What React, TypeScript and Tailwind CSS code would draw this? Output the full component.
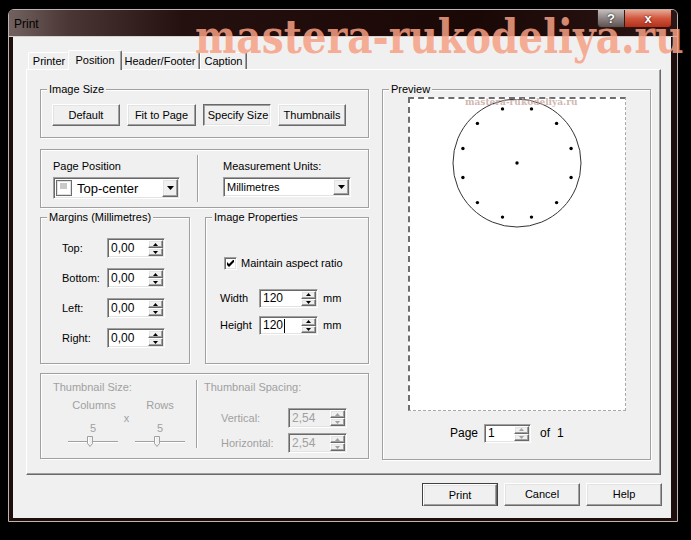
import React from "react";

const raised =
  "border border-t-white border-l-white border-r-[#696969] border-b-[#696969] shadow-[inset_-1px_-1px_0_#a0a0a0,inset_1px_1px_0_#e3e3e3]";
const pressed =
  "border border-t-[#696969] border-l-[#696969] border-r-white border-b-white shadow-[inset_1px_1px_0_#a0a0a0,inset_-1px_-1px_0_#e3e3e3]";
const sunken =
  "border border-t-[#a0a0a0] border-l-[#a0a0a0] border-r-white border-b-white shadow-[inset_1px_1px_0_#696969,inset_-1px_-1px_0_#e3e3e3]";
const etched = "border border-[#a0a0a0] shadow-[inset_1px_1px_0_#fff,1px_1px_0_#fff]";

function Tri({ up, w = 5, color = "#000" }: { up?: boolean; w?: number; color?: string }) {
  const h = Math.ceil(w / 2);
  const d = up ? `M${w / 2} 0 L${w} ${h} L0 ${h}Z` : `M0 0 L${w} 0 L${w / 2} ${h}Z`;
  return (
    <svg width={w} height={h} viewBox={`0 0 ${w} ${h}`} className="block">
      <path d={d} fill={color} />
    </svg>
  );
}

function Spinner({ dim }: { dim?: boolean }) {
  const c = dim ? "#a0a0a0" : "#000";
  return (
    <div className="flex w-[16px] flex-col p-px pl-0">
      <div className={`flex flex-1 items-center justify-center bg-[#f0f0f0] ${raised}`}>
        <Tri up w={5} color={c} />
      </div>
      <div className={`flex flex-1 items-center justify-center bg-[#f0f0f0] ${raised}`}>
        <Tri w={5} color={c} />
      </div>
    </div>
  );
}

function SpinEdit({
  value,
  className,
  dim,
  dimArrows,
  caret,
}: {
  value: string;
  className: string;
  dim?: boolean;
  dimArrows?: boolean;
  caret?: boolean;
}) {
  return (
    <div className={`flex ${sunken} ${dim ? "bg-[#f0f0f0] text-[#a0a0a0]" : "bg-white"} ${className}`}>
      <div className="flex flex-1 items-center pl-[3px] text-[12px]">
        {value}
        {caret && <span className="ml-px inline-block h-[14px] w-px bg-black" />}
      </div>
      <Spinner dim={dim || dimArrows} />
    </div>
  );
}

function Combo({ className, children }: { className: string; children: React.ReactNode }) {
  return (
    <div className={`flex bg-white ${sunken} ${className}`}>
      <div className="flex flex-1 items-center p-px">{children}</div>
      <div className="flex p-px">
        <div className={`flex w-[16px] items-center justify-center bg-[#f0f0f0] ${raised}`}>
          <Tri w={7} />
        </div>
      </div>
    </div>
  );
}

function GroupBox({
  label,
  className,
  children,
}: {
  label: string;
  className: string;
  children?: React.ReactNode;
}) {
  return (
    <div className={`relative ${etched} ${className}`}>
      <span className="absolute -top-[7px] left-[6px] bg-[#f0f0f0] px-[2px] leading-[13px]">{label}</span>
      {children}
    </div>
  );
}

function Btn({ label, className = "", down }: { label: string; className?: string; down?: boolean }) {
  return (
    <div
      className={`flex h-[22px] items-center justify-center bg-[#f0f0f0] ${down ? `${pressed} pl-[2px] pt-px` : raised} ${className}`}
    >
      {label}
    </div>
  );
}

function Slider() {
  return (
    <svg width="50" height="12" viewBox="0 0 50 12" className="block">
      <line x1="0" y1="5.5" x2="50" y2="5.5" stroke="#a0a0a0" />
      <line x1="0" y1="6.5" x2="50" y2="6.5" stroke="#fff" />
      <path d="M19.5 0.5 H24.5 V7.5 L22 10.5 L19.5 7.5Z" fill="#f0f0f0" stroke="#a0a0a0" />
      <path d="M20.5 1 V7.5" stroke="#fff" />
    </svg>
  );
}

function PageDrawing() {
  const cx = 107;
  const cy = 64;
  const dots = Array.from({ length: 12 }, (_, i) => {
    const a = ((15 + i * 30) * Math.PI) / 180;
    return [cx + 56 * Math.sin(a), cy - 56 * Math.cos(a)];
  });
  return (
    <svg width="216" height="132" viewBox="0 0 216 132" className="block">
      <circle cx={cx} cy={cy} r="64" fill="none" stroke="#333" strokeWidth="1" />
      {dots.map(([x, y], i) => (
        <circle key={i} cx={x} cy={y} r="1.7" fill="#000" />
      ))}
      <circle cx={cx} cy={cy} r="1.7" fill="#000" />
    </svg>
  );
}

export default function App() {
  return (
    <div className="relative h-[540px] w-[691px] overflow-hidden bg-black pl-[8px] pt-[9px] font-['Liberation_Sans',Arial,sans-serif] text-[11px] leading-[13px] text-black">
      <div className="flex h-[513px] w-[670px] flex-col overflow-hidden rounded-t-[6px] border border-[#bdb3b1] bg-[#1e0e0c]">
        {/* title bar */}
        <div className="flex h-[27px] items-start justify-between border-b border-[#d8d0cf] bg-[linear-gradient(to_right,#716260_0%,#4a3634_9%,#24100e_26%,#1a0806_70%,#2a1614_100%)]">
          <span className="pl-[5px] pt-[7px] text-[12px] leading-[14px] text-black">Print</span>
          <div className="relative z-20 -mt-px flex pr-[5px]">
            <div className="flex h-[19px] w-[28px] items-center justify-center rounded-bl-[4px] border border-[#2a1a18] bg-[linear-gradient(to_bottom,#c4bcbb,#8d8382_50%,#5d5250)] text-[13px] font-bold text-white [text-shadow:0_0_2px_#000]">
              ?
            </div>
            <div className="flex h-[19px] w-[47px] items-center justify-center rounded-br-[4px] border border-l-0 border-[#3a1008] bg-[linear-gradient(to_bottom,#e8a894,#d0553c_50%,#b3301c)] text-[13px] font-bold text-white [text-shadow:0_0_2px_#400]">
              x
            </div>
          </div>
        </div>

        {/* frame body */}
        <div className="flex-1 pb-[3px] pl-[4px] pr-[6px]">
          <div className="flex h-[481px] w-[658px] flex-col bg-[#f0f0f0] pl-[13px] pt-[13px]">
            {/* tabs */}
            <div className="flex h-[19px] items-end pl-[2px]">
              <div className="flex h-[17px] w-[42px] justify-center rounded-t-[2px] border-l border-r border-t border-l-white border-r-[#696969] border-t-white leading-[16px] shadow-[inset_-1px_0_0_#a0a0a0]">
                Printer
              </div>
              <div className="relative z-10 -mx-[2px] -mb-px flex h-[20px] w-[54px] justify-center rounded-t-[2px] border-l border-r border-t border-l-white border-r-[#696969] border-t-white bg-[#f0f0f0] pt-[2px] leading-[14px] shadow-[inset_-1px_0_0_#a0a0a0]">
                Position
              </div>
              <div className="flex h-[17px] w-[80px] justify-center rounded-t-[2px] border-l border-r border-t border-l-white border-r-[#696969] border-t-white leading-[16px] shadow-[inset_-1px_0_0_#a0a0a0]">
                Header/Footer
              </div>
              <div className="flex h-[17px] w-[47px] justify-center rounded-t-[2px] border-l border-r border-t border-l-white border-r-[#696969] border-t-white leading-[16px] shadow-[inset_-1px_0_0_#a0a0a0]">
                Caption
              </div>
            </div>

            {/* tab panel */}
            <div className="flex h-[406px] w-[635px] gap-[13px] border border-b-[#696969] border-l-white border-r-[#696969] border-t-white pl-[13px] pt-[19px] shadow-[inset_-1px_-1px_0_#a0a0a0]">
              {/* left column */}
              <div className="flex w-[329px] flex-col">
                <GroupBox label="Image Size" className="h-[49px] w-[329px]">
                  <div className="flex gap-[7px] pl-[11px] pt-[14px]">
                    <Btn label="Default" className="w-[68px]" />
                    <Btn label="Fit to Page" className="w-[69px]" />
                    <Btn label="Specify Size" className="w-[68px]" down />
                    <Btn label="Thumbnails" className="w-[68px]" />
                  </div>
                </GroupBox>

                <div className={`mt-[11px] flex h-[59px] w-[329px] pl-[12px] ${etched}`}>
                  <div className="flex w-[127px] flex-col pt-[10px]">
                    <span>Page Position</span>
                    <Combo className="mt-[4px] h-[22px] w-[127px]">
                      <svg width="16" height="16" viewBox="0 0 16 16" className="ml-px block">
                        <rect x="0.5" y="0.5" width="15" height="15" fill="#fff" stroke="#6d6d6d" />
                        <rect x="1.5" y="1.5" width="13" height="13" fill="none" stroke="#e0e0e0" />
                        <rect x="4" y="3" width="7" height="6" fill="#c9c9c9" />
                      </svg>
                      <span className="ml-[5px] text-[13px]">Top-center</span>
                    </Combo>
                  </div>
                  <div className="ml-[17px] mt-[5px] h-[47px] w-px bg-[#a0a0a0] shadow-[1px_0_0_#fff]" />
                  <div className="ml-[25px] flex w-[128px] flex-col pt-[10px]">
                    <span>Measurement Units:</span>
                    <Combo className="mt-[4px] h-[20px] w-[128px]">
                      <span className="pl-[2px]">Millimetres</span>
                    </Combo>
                  </div>
                </div>

                <div className="mt-[9px] flex gap-[15px]">
                  <GroupBox label="Margins (Millimetres)" className="h-[147px] w-[150px]">
                    <div className="flex flex-col gap-[10px] pl-[21px] pt-[20px]">
                      {["Top:", "Bottom:", "Left:", "Right:"].map((l) => (
                        <div key={l} className="flex items-center">
                          <span className="w-[45px]">{l}</span>
                          <SpinEdit value="0,00" className="h-[20px] w-[58px]" />
                        </div>
                      ))}
                    </div>
                  </GroupBox>
                  <GroupBox label="Image Properties" className="h-[147px] w-[164px]">
                    <div className="flex items-center pl-[18px] pt-[39px]">
                      <div className={`flex h-[13px] w-[13px] items-center justify-center bg-white ${sunken}`}>
                        <svg width="7" height="7" viewBox="0 0 7 7" className="block">
                          <path d="M0 2 L0 5 L2 7 L7 2 L7 -1 L2 4Z" fill="#000" />
                        </svg>
                      </div>
                      <span className="ml-[4px]">Maintain aspect ratio</span>
                    </div>
                    <div className="mt-[19px] flex items-center pl-[14px]">
                      <span className="w-[39px]">Width</span>
                      <SpinEdit value="120" className="h-[19px] w-[59px]" />
                      <span className="ml-[5px]">mm</span>
                    </div>
                    <div className="mt-[8px] flex items-center pl-[14px]">
                      <span className="w-[39px]">Height</span>
                      <SpinEdit value="120" caret className="h-[19px] w-[59px]" />
                      <span className="ml-[5px]">mm</span>
                    </div>
                  </GroupBox>
                </div>

                <div className={`mt-[9px] flex h-[86px] w-[329px] text-[#a0a0a0] ${etched}`}>
                  <div className="flex w-[155px] flex-col pl-[12px] pt-[7px]">
                    <span>Thumbnail Size:</span>
                    <div className="ml-[15px] mt-[5px] flex">
                      <div className="flex w-[50px] flex-col items-center">
                        <span className="pl-[2px]">Columns</span>
                        <span className="mt-[10px]">5</span>
                        <div className="mt-px">
                          <Slider />
                        </div>
                      </div>
                      <div className="flex w-[17px] justify-center pt-[13px]">x</div>
                      <div className="flex w-[50px] flex-col items-center">
                        <span>Rows</span>
                        <span className="mt-[10px]">5</span>
                        <div className="mt-px">
                          <Slider />
                        </div>
                      </div>
                    </div>
                  </div>
                  <div className="mt-[6px] h-[68px] w-px bg-[#a0a0a0] shadow-[1px_0_0_#fff]" />
                  <div className="flex flex-col pl-[7px] pt-[7px]">
                    <span>Thumbnail Spacing:</span>
                    <div className="mt-[14px] flex items-center pl-[17px]">
                      <span className="w-[67px]">Vertical:</span>
                      <SpinEdit value="2,54" dim className="h-[20px] w-[59px]" />
                    </div>
                    <div className="mt-[5px] flex items-center pl-[17px]">
                      <span className="w-[67px]">Horizontal:</span>
                      <SpinEdit value="2,54" dim className="h-[20px] w-[59px]" />
                    </div>
                  </div>
                </div>
              </div>

              {/* preview */}
              <GroupBox label="Preview" className="h-[371px] w-[269px]">
                <div className="flex flex-col pl-[25px] pt-[7px]">
                  <div className="relative h-[314px] w-[218px] border-b border-l-2 border-r border-t-2 border-dashed border-b-[#a8a8a8] border-l-[#6e6e6e] border-r-[#a8a8a8] border-t-[#6e6e6e] bg-white">
                    <PageDrawing />
                    <span className="absolute -top-[2px] left-[55px] whitespace-nowrap font-['DejaVu_Serif',serif] text-[9px] font-bold leading-[10px] text-[#c4a49c]/80">
                      mastera-rukodeliya.ru
                    </span>
                  </div>
                  <div className="mt-[13px] flex items-center pl-[42px]">
                    <span className="text-[12px]">Page</span>
                    <SpinEdit value="1" dimArrows className="ml-[6px] h-[19px] w-[47px]" />
                    <span className="ml-[9px] text-[12px]">of</span>
                    <span className="ml-[7px] text-[12px]">1</span>
                  </div>
                </div>
              </GroupBox>
            </div>

            {/* dialog buttons */}
            <div className="mt-[8px] flex justify-end gap-[6px] pr-[9px]">
              <div className="h-[23px] w-[76px] border border-[#404040]">
                <Btn label="Print" className="h-[21px] w-[74px]" />
              </div>
              <Btn label="Cancel" className="h-[23px] w-[76px]" />
              <Btn label="Help" className="h-[23px] w-[76px]" />
            </div>
          </div>
        </div>
      </div>

      {/* watermark */}
      <div className="pointer-events-none absolute left-[195px] top-[12px] z-10 origin-left scale-x-[0.85] whitespace-nowrap font-['DejaVu_Serif',serif] text-[46px] font-bold leading-[50px] text-[#f7a084]/85">
        mastera-rukodeliya.ru
      </div>
    </div>
  );
}
